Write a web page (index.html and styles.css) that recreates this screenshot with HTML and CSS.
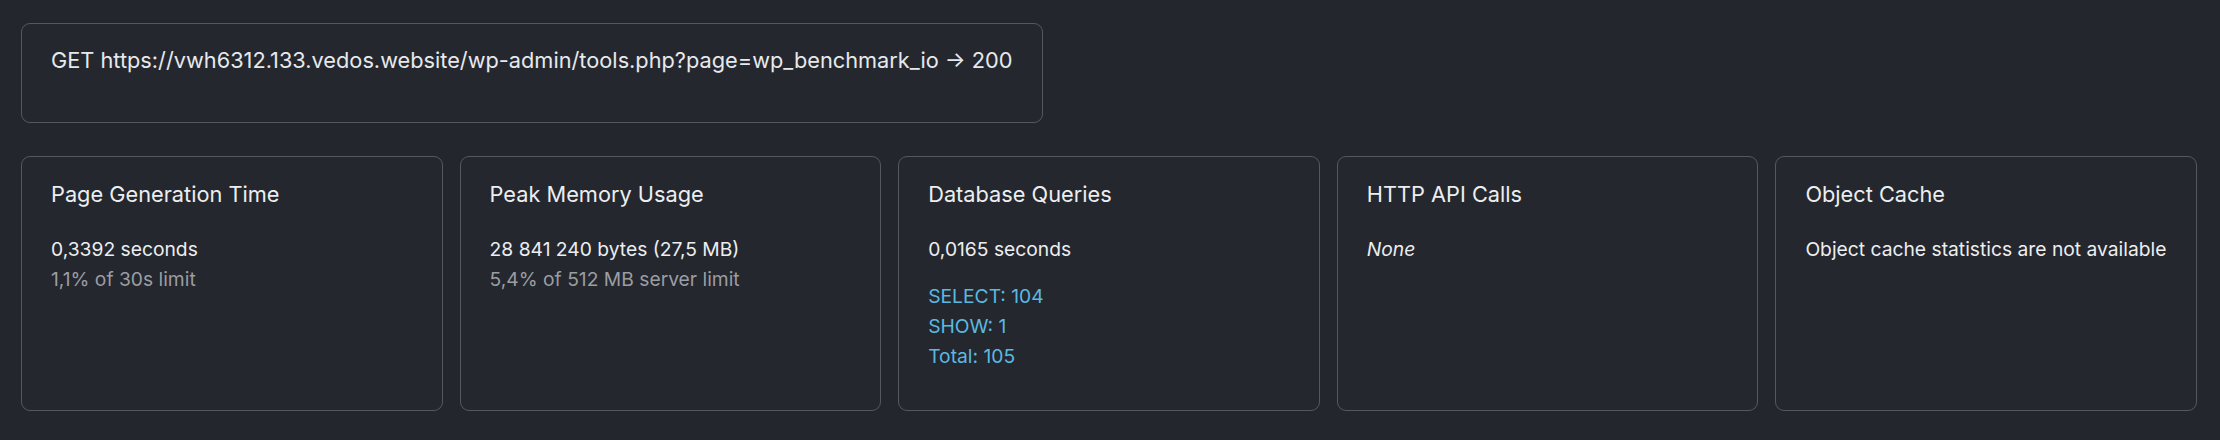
FILE: index.html
```html
<!DOCTYPE html>
<html lang="en">
<head>
<meta charset="utf-8">
<title>Benchmark</title>
<link rel="stylesheet" href="styles.css">
</head>
<body>
<div class="page">
  <div class="request">GET https://vwh6312.133.vedos.website/wp-admin/tools.php?page=wp_benchmark_io → 200</div>
  <div class="cards">
    <section class="card">
      <h2 class="card-title">Page Generation Time</h2>
      <div class="value">0,3392 seconds</div>
      <div class="note">1,1% of 30s limit</div>
    </section>
    <section class="card">
      <h2 class="card-title">Peak Memory Usage</h2>
      <div class="value">28 841 240 bytes (27,5 MB)</div>
      <div class="note">5,4% of 512 MB server limit</div>
    </section>
    <section class="card">
      <h2 class="card-title">Database Queries</h2>
      <div class="value">0,0165 seconds</div>
      <ul class="queries">
        <li>SELECT: 104</li>
        <li>SHOW: 1</li>
        <li>Total: 105</li>
      </ul>
    </section>
    <section class="card">
      <h2 class="card-title">HTTP API Calls</h2>
      <div class="value"><em>None</em></div>
    </section>
    <section class="card">
      <h2 class="card-title">Object Cache</h2>
      <div class="value">Object cache statistics are not available</div>
    </section>
  </div>
</div>
</body>
</html>
```
FILE: styles.css
```css
html, body {
  margin: 0;
  padding: 0;
  background: #23262d;
}

body {
  font-family: Inter, "Noto Sans", "Liberation Sans", sans-serif;
  color: #e7e9ec;
}

.page {
  padding: 23px 23px 0 21px;
}

.request {
  display: inline-block;
  box-sizing: border-box;
  height: 100px;
  padding: 20px 30px 0 29px;
  border: 1px solid #55585e;
  border-radius: 9px;
  background: #24272e;
  font-size: 21.75px;
  line-height: 33px;
}

.cards {
  display: grid;
  grid-template-columns: repeat(5, 1fr);
  gap: 17px;
  margin-top: 33px;
}

.card {
  padding: 21px 14px 39px 29px;
  border: 1px solid #55585e;
  border-radius: 9px;
  background: #24272e;
}

.card-title {
  margin: 0 0 23px 0;
  font-size: 21.75px;
  line-height: 33px;
  font-weight: 400;
  color: #eceef0;
}

.value {
  font-size: 19.25px;
  line-height: 30px;
  color: #eceef0;
}

.note {
  font-size: 19.25px;
  line-height: 30px;
  color: #9b9da2;
}

.queries {
  list-style: none;
  margin: 17px 0 0 0;
  padding: 0;
  font-size: 19.25px;
  line-height: 30px;
  color: #5bb9e1;
}
```
